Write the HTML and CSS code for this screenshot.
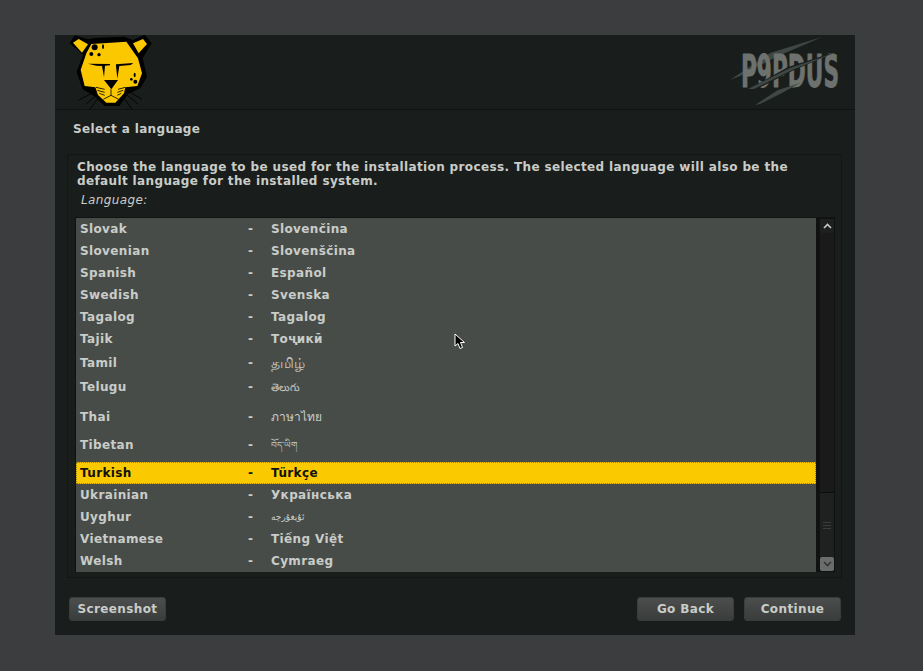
FILE: index.html
```html
<!DOCTYPE html>
<html lang="en">
<head>
    <meta charset="UTF-8">
    <meta name="viewport" content="width=device-width, initial-scale=1.0">
    <title>Select a language</title>
    <link rel="stylesheet" href="styles.css">
</head>
<body>
    <div class="window">
        <div class="header">
            <!-- cheetah head -->
            <svg class="logo" viewBox="40 15 252 225">
                <g stroke="#000" stroke-width="2.5" fill="none">
                    <path d="M120 186 L72 210 M125 196 L95 222 M130 205 L105 238"/>
                    <path d="M215 180 L262 208 M210 190 L250 222 M205 200 L232 238"/>
                </g>
                <path fill="#000" d="M45 40 L60 16 L100 28 L118 24 L208 20 L235 30 L270 14 L291 40 L264 85 L277 140 L258 174 L220 192 L194 228 L150 228 L118 198 L84 178 L66 125 L85 75 Z"/>
                <path fill="#fbc800" d="M55 38 L72 27 L100 43 L82 68 Z"/>
                <path fill="#fbc800" d="M235 40 L265 27 L277 42 L252 70 Z"/>
                <path fill="#fbc800" d="M110 42 L215 35 L250 85 L262 130 L248 168 L212 172 L208 190 L182 218 L155 218 L130 195 L122 172 L90 168 L78 120 L95 70 Z"/>
                <g fill="#000">
                    <circle cx="120" cy="52" r="9"/>
                    <circle cx="110" cy="72" r="6"/>
                    <circle cx="133" cy="74" r="5"/>
                    <ellipse cx="145" cy="50" rx="3" ry="7"/>
                    <ellipse cx="240" cy="135" rx="3" ry="7"/>
                    <circle cx="230" cy="148" r="4"/>
                    <circle cx="242" cy="155" r="6"/>
                    <path d="M100 101 L166 102 L166 106 L151 107 L148 142 L142 108 L125 107 Z"/>
                    <path d="M184 103 L236 99 L228 105 L194 108 L188 146 L184 108 Z"/>
                    <path d="M148 150 L190 150 L170 178 Z"/>
                </g>
                <g stroke="#000" stroke-width="2.5" fill="none">
                    <path d="M169 178 L169 196 M169 196 L146 208 M169 196 L192 208"/>
                    <path d="M124 172 L150 178 M128 181 L150 187 M134 190 L150 196"/>
                    <path d="M212 172 L190 178 M206 181 L188 187 M200 190 L188 196"/>
                </g>
            </svg>
            <svg class="brand" viewBox="0 0 140 90">
                <path fill="#3f4744" d="M10 50 L50 23 L102 7 L56 27 L20 46 Z"/>
                <text class="brand-text" x="21" y="57" textLength="98" lengthAdjust="spacingAndGlyphs">P9PDUS</text>
                <path fill="#1a1f1d" d="M27 60 L68 37 L118 21 L72 41 L33 61 Z"/>
                <path fill="#3f4744" d="M28 59 L70 38 L117 22 L72 40 L34 59 Z"/>
                <path fill="#3f4744" d="M35 75 L58 60 L80 53 L62 63 L40 74 Z"/>
            </svg>
        </div>
        <div class="title">Select a language</div>
        <div class="panel">
            <p class="intro">Choose the language to be used for the installation process. The selected language will also be the default language for the installed system.</p>
            <div class="field-label">Language:</div>
            <div class="chooser">
                <div class="list">
                    <div class="row"><span>Slovak</span><span>-</span><span>Slovenčina</span></div>
                    <div class="row"><span>Slovenian</span><span>-</span><span>Slovenščina</span></div>
                    <div class="row"><span>Spanish</span><span>-</span><span>Español</span></div>
                    <div class="row"><span>Swedish</span><span>-</span><span>Svenska</span></div>
                    <div class="row"><span>Tagalog</span><span>-</span><span>Tagalog</span></div>
                    <div class="row"><span>Tajik</span><span>-</span><span>Тоҷикӣ</span></div>
                    <div class="row tamil"><span>Tamil</span><span>-</span><span class="thin ta">தமிழ்</span></div>
                    <div class="row telugu"><span>Telugu</span><span>-</span><span class="thin te">తెలుగు</span></div>
                    <div class="row thai"><span>Thai</span><span>-</span><span class="thin">ภาษาไทย</span></div>
                    <div class="row tibetan"><span>Tibetan</span><span>-</span><span class="thin bo">བོད་ཡིག</span></div>
                    <div class="row selected"><span>Turkish</span><span>-</span><span>Türkçe</span></div>
                    <div class="row"><span>Ukrainian</span><span>-</span><span>Українська</span></div>
                    <div class="row"><span>Uyghur</span><span>-</span><span class="thin ug">ئۇيغۇرچە</span></div>
                    <div class="row"><span>Vietnamese</span><span>-</span><span>Tiếng Việt</span></div>
                    <div class="row"><span>Welsh</span><span>-</span><span>Cymraeg</span></div>
                </div>
                <div class="scrollbar">
                    <div class="sb-btn">
                        <svg width="9" height="6" viewBox="0 0 9 6"><path d="M1 5 L4.5 1.5 L8 5" fill="none" stroke="#c4c7c4" stroke-width="1.6"/></svg>
                    </div>
                    <div class="sb-space"></div>
                    <div class="sb-thumb"><i></i><i></i><i></i></div>
                    <div class="sb-btn down">
                        <svg width="9" height="6" viewBox="0 0 9 6"><path d="M1 1 L4.5 4.5 L8 1" fill="none" stroke="#333" stroke-width="1.6"/></svg>
                    </div>
                </div>
            </div>
        </div>
        <div class="buttons">
            <button class="btn">Screenshot</button>
            <div class="btn-right">
                <button class="btn">Go Back</button>
                <button class="btn">Continue</button>
            </div>
        </div>
    </div>

    <!-- mouse pointer -->
    <svg class="pointer" width="12" height="18" viewBox="0 0 12 18">
        <path d="M1 1 L1 13 L4 10.5 L6 15.5 L8.5 14.5 L6.5 9.5 L10.5 9.5 Z" fill="#000" stroke="#fff" stroke-width="1"/>
    </svg>
</body>
</html>
```

FILE: styles.css
```css
body {
    font-family: "DejaVu Sans", sans-serif;
    margin: 0;
    padding: 35px 0 0 55px;
    background-color: #3c3d3f;
    color: #c9ccc8;
    font-size: 12px;
    font-weight: bold;
    letter-spacing: 0.37px;
}

.window {
    width: 800px;
    height: 600px;
    box-sizing: border-box;
    background-color: #191e1c;
    display: flex;
    flex-direction: column;
}

.header {
    height: 75px;
    box-sizing: border-box;
    border-bottom: 1px solid #0f1312;
    display: flex;
    justify-content: space-between;
    padding-left: 13px;
}

.logo {
    width: 84px;
    height: 75px;
    flex: none;
}

.brand {
    width: 140px;
    height: 90px;
    margin: -5px -5px 0 0;
    flex: none;
    overflow: visible;
}

.brand-text {
    font-family: "DejaVu Sans Condensed", "DejaVu Sans", sans-serif;
    font-size: 44px;
    font-weight: bold;
    letter-spacing: 0;
    fill: #6e726f;
    stroke: #6e726f;
    stroke-width: 0.8px;
    stroke-linejoin: round;
}

.title {
    box-sizing: border-box;
    padding: 11px 0 0 18px;
    height: 44px;
    line-height: 16px;
}

.panel {
    margin: 0 13px 0 12px;
    height: 424px;
    box-sizing: border-box;
    border: 1px solid #121615;
    padding: 5px 7px 4px 7px;
}

.intro {
    margin: 0 0 0 2px;
    line-height: 14px;
}

.field-label {
    font-weight: normal;
    font-style: italic;
    margin: 4px 0 0 6px;
    line-height: 16px;
    height: 25px;
}

.chooser {
    display: flex;
    height: 355px;
    width: 760px;
    background-color: #0f1211;
}

.list {
    width: 740px;
    margin: 1px 0 0 1px;
    background-color: #484c49;
    box-sizing: border-box;
}

.row {
    display: grid;
    grid-template-columns: 168px 23px 1fr;
    height: 22px;
    line-height: 22px;
    padding-left: 4px;
    box-sizing: border-box;
}

.row.tamil { height: 26px; line-height: 26px; }
.row.telugu { height: 29px; line-height: 22px; }
.row.thai { height: 26px; line-height: 24px; }
.row.tibetan { height: 31px; line-height: 28px; }

.row.selected {
    background-color: #fbc900;
    color: #111;
    outline: 1px dotted #8a7a20;
    outline-offset: -1px;
}

.thin {
    font-weight: normal;
    letter-spacing: 0;
    font-size: 12px;
}

.ta { font-size: 14px; }
.te { font-size: 10.5px; }
.bo { font-size: 9px; }
.ug { font-size: 9px; }

.scrollbar {
    width: 14px;
    margin: 2px 0 1px 4px;
    background-color: #1a1a1a;
    display: flex;
    flex-direction: column;
}

.sb-btn {
    height: 14px;
    background-color: #1d201f;
    border-radius: 2px;
    display: flex;
    align-items: center;
    justify-content: center;
}

.sb-btn.down {
    background-color: #6a6d6b;
}

.sb-space {
    flex: 1;
}

.sb-thumb {
    height: 65px;
    box-sizing: border-box;
    border-top: 1px solid #0b0c0c;
    background-color: #1e2120;
    display: flex;
    flex-direction: column;
    align-items: center;
    justify-content: center;
    gap: 2px;
}

.sb-thumb i {
    display: block;
    width: 8px;
    height: 1px;
    background-color: #3a3d3c;
}

.buttons {
    display: flex;
    justify-content: space-between;
    padding: 19px 14px 0 14px;
}

.btn-right {
    display: flex;
    gap: 10px;
}

.btn {
    width: 97px;
    height: 24px;
    padding: 0;
    font-family: inherit;
    font-size: 12px;
    font-weight: bold;
    letter-spacing: 0.37px;
    color: #c9ccc8;
    background: linear-gradient(#4b4e4c, #3a3d3b);
    border: 1px solid #3a3d3c;
    border-radius: 3px;
}

.pointer {
    position: absolute;
    left: 454px;
    top: 333px;
}
```
